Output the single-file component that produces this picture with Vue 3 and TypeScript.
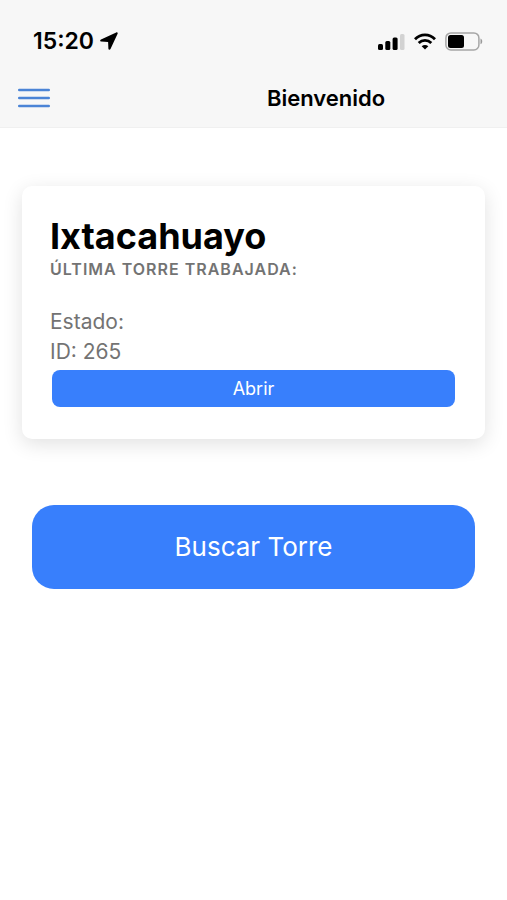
<script setup lang="ts">
import { ref } from 'vue'

interface Tower {
  id: number
  name: string
  state: string
}

const time = '15:20'
const tower = ref<Tower>({ id: 265, name: 'Ixtacahuayo', state: '' })
</script>

<template>
  <div class="page">
    <header class="header">
      <div class="status">
        <div class="clock">
          <span>{{ time }}</span>
          <svg width="18" height="18" viewBox="0 0 18 18" aria-hidden="true">
            <path d="M16.2 .4 1 7.400C-.2 8-.1 9.500 1.300 9.600L8.100 9.900 8.400 16.700C8.500 18.100 9.900 18.200 10.500 17L17.600 1.800C18 .7 17.300 0 16.200 .4Z" />
          </svg>
        </div>
        <div class="indicators">
          <svg width="27" height="17" viewBox="0 0 27 17" aria-hidden="true">
            <rect x="0" y="11" width="5" height="6" rx="1.500" />
            <rect x="7.300" y="8" width="5" height="9" rx="1.500" />
            <rect x="14.600" y="4.500" width="5" height="12.500" rx="1.500" />
            <rect x="22" y="1" width="4.500" height="16" rx="1.500" fill="#d2d2d2" />
          </svg>
          <svg width="22" height="17" viewBox="0 0 22 17" aria-hidden="true">
            <g fill="none" stroke="#000" stroke-width="2.800">
              <path d="M1 6.200C6.600 .5 15.400 .5 21 6.200" />
              <path d="M4.700 10C8.300 6.500 13.700 6.500 17.300 10" />
            </g>
            <path d="M11 16.500 7.700 13.200C9.500 11.500 12.500 11.500 14.300 13.200Z" />
          </svg>
          <svg width="38" height="19" viewBox="0 0 38 19" aria-hidden="true">
            <rect x=".9" y=".9" width="33" height="17" rx="5" fill="none" stroke="#a6a6a6" stroke-width="1.500" />
            <rect x="3" y="3" width="16" height="13" rx="2.500" />
            <path d="M35.500 6.500C37.800 7.300 37.800 11.500 35.500 12.300Z" fill="#999" />
          </svg>
        </div>
      </div>
      <div class="toolbar">
        <button class="menu" type="button" aria-label="Menú">
          <svg width="32" height="20" viewBox="0 0 32 20" aria-hidden="true">
            <path d="M1.200 2H30.800M1.200 10H30.800M1.200 18H30.800" stroke="#4b84d6" stroke-width="2.400" stroke-linecap="round" />
          </svg>
        </button>
        <h1 class="title">Bienvenido</h1>
      </div>
    </header>

    <main class="content">
      <section class="card">
        <h2 class="name">{{ tower.name }}</h2>
        <h3 class="subtitle">Última torre trabajada:</h3>
        <p class="detail">Estado: {{ tower.state }}</p>
        <p class="detail">ID: {{ tower.id }}</p>
        <button class="open" type="button">Abrir</button>
      </section>
      <button class="search" type="button">Buscar Torre</button>
    </main>
  </div>
</template>

<style>
body {
  margin: 0;
  background: #fff;
}
</style>

<style scoped>
.page {
  min-height: 100vh;
  font-family: Inter, "Liberation Sans", sans-serif;
  color: #000;
}

svg {
  display: block;
}

button {
  border: 0;
  font: inherit;
  cursor: pointer;
}

.header {
  background: #f7f7f7;
  border-bottom: 1px solid #f0f0f0;
}

.status {
  display: flex;
  align-items: center;
  justify-content: space-between;
  padding: 28px 24px 0 33px;
}

.clock {
  display: flex;
  align-items: center;
  gap: 6px;
  font-size: 23px;
  font-weight: 600;
  line-height: 26px;
}

.indicators {
  display: flex;
  align-items: center;
  gap: 9px;
}

.toolbar {
  display: flex;
  align-items: center;
  padding: 30px 0 15px;
}

.menu {
  padding: 4px 18px;
  background: none;
}

.title {
  flex: 1;
  margin: 0;
  padding-left: 77px;
  font-size: 22px;
  font-weight: 600;
  line-height: 26px;
  text-align: center;
}

.content {
  display: flex;
  flex-direction: column;
  padding: 58px 22px;
}

.card {
  display: flex;
  flex-direction: column;
  padding: 28px;
  border-radius: 10px;
  background: #fff;
  box-shadow: 0 5px 20px rgba(0, 0, 0, 0.12);
}

.name {
  margin: 0;
  font-size: 36px;
  font-weight: 700;
  line-height: 45px;
}

.subtitle {
  margin: 0 0 28px;
  font-size: 16px;
  font-weight: 600;
  line-height: 20px;
  letter-spacing: 1px;
  text-transform: uppercase;
  color: #737373;
}

.detail {
  margin: 0;
  font-size: 21px;
  line-height: 30px;
  color: #737373;
}

.open {
  margin: 3px 2px 4px;
  padding: 7px;
  border-radius: 8px;
  background: #387ffc;
  color: #fff;
  font-size: 18px;
  line-height: 23px;
}

.search {
  margin: 66px 10px 0;
  padding: 25px;
  border-radius: 22px;
  background: #387ffc;
  color: #fff;
  font-size: 26px;
  line-height: 34px;
}
</style>
